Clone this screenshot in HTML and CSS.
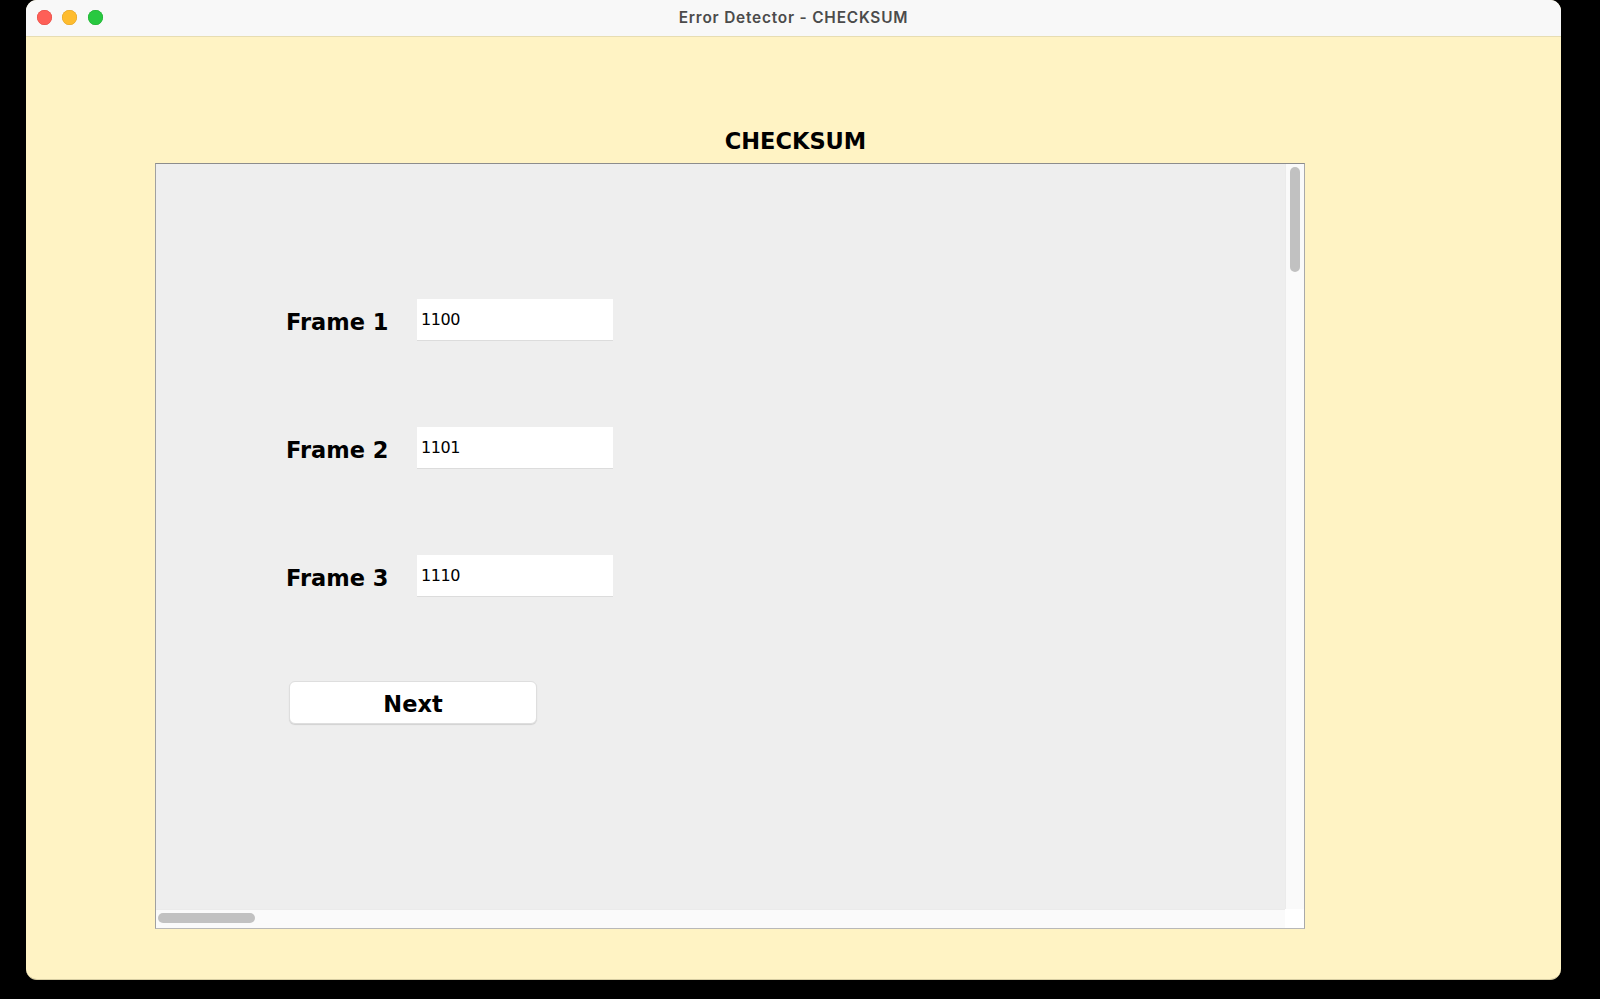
FILE: index.html
```html
<!DOCTYPE html>
<html lang="en">
<head>
<meta charset="utf-8">
<title>Error Detector - CHECKSUM</title>
<link rel="stylesheet" href="styles.css">
</head>
<body>
<div class="window">
  <div class="titlebar">
    <div class="lights">
      <span class="light red"></span>
      <span class="light yellow"></span>
      <span class="light green"></span>
    </div>
    <div class="wintitle">Error Detector - CHECKSUM</div>
    <div></div>
  </div>
  <div class="content">
    <h1 class="heading">CHECKSUM</h1>
    <div class="pane">
      <div class="viewport">
        <div class="row">
          <label class="label" for="f1">Frame 1</label>
          <input class="field" id="f1" type="text" value="1100">
        </div>
        <div class="row">
          <label class="label" for="f2">Frame 2</label>
          <input class="field" id="f2" type="text" value="1101">
        </div>
        <div class="row">
          <label class="label" for="f3">Frame 3</label>
          <input class="field" id="f3" type="text" value="1110">
        </div>
        <button class="next" type="button">Next</button>
      </div>
      <div class="vbar"><div class="vthumb"></div></div>
      <div class="hbar"><div class="hthumb"></div></div>
      <div class="corner"></div>
    </div>
  </div>
</div>
</body>
</html>
```

FILE: styles.css
```css
* { box-sizing: border-box; }

html, body {
  margin: 0;
  padding: 0;
  background: #000000;
  height: 999px;
  overflow: hidden;
}

.window {
  margin-left: 26px;
  width: 1535px;
  height: 980px;
  border-radius: 11px;
  overflow: hidden;
  background: #fff3c4;
  display: flex;
  flex-direction: column;
  border-bottom: 1px solid #d6cca2;
}

.titlebar {
  height: 37px;
  flex: none;
  background: #f8f8f8;
  border-bottom: 1px solid #e7ddb2;
  display: grid;
  grid-template-columns: 1fr auto 1fr;
  align-items: center;
}

.lights {
  display: flex;
  gap: 10.6px;
  padding-left: 10.7px;
  padding-bottom: 1px;
}

.light {
  width: 15px;
  height: 15px;
  border-radius: 50%;
  display: block;
}
.light.red { background: #fe5f57; box-shadow: inset 0 0 0 0.5px #e14942; }
.light.yellow { background: #febc2e; box-shadow: inset 0 0 0 0.5px #dfa123; }
.light.green { background: #28c840; box-shadow: inset 0 0 0 0.5px #1eac2f; }

.wintitle {
  font-family: Inter, "Open Sans", sans-serif;
  font-weight: 600;
  font-size: 15.4px;
  letter-spacing: 0.8px;
  color: #4b4b4b;
  padding-bottom: 1px;
}

.content {
  flex: 1;
  padding-top: 91px;
}

.heading {
  margin: 0 0 9px 0;
  text-align: center;
  font-family: "DejaVu Sans", Verdana, sans-serif;
  font-weight: bold;
  font-size: 22.5px;
  line-height: 26px;
  color: #000000;
  padding-left: 4px;
}

.pane {
  margin-left: 129px;
  width: 1150px;
  height: 766px;
  border: 1px solid;
  border-color: #8c8c8c #a9a9a9 #b8b8b8 #a0a0a0;
  display: grid;
  grid-template-columns: 1fr 19px;
  grid-template-rows: 1fr 19px;
  background: #eeeeee;
}

.viewport {
  background: #eeeeee;
  padding: 135px 0 0 130px;
  display: flex;
  flex-direction: column;
  gap: 87px;
  overflow: hidden;
}

.row {
  display: flex;
  align-items: center;
  height: 41px;
}

.label {
  width: 131px;
  flex: none;
  font-family: "DejaVu Sans", Verdana, sans-serif;
  font-weight: bold;
  font-size: 22.5px;
  line-height: 26px;
  padding-top: 5px;
  color: #000000;
}

.field {
  width: 196px;
  height: 41px;
  border: none;
  outline: none;
  margin: 0;
  background: #ffffff;
  box-shadow: 0 1px 0 #dcdcdc;
  padding: 0 0 0 4px;
  font-family: "DejaVu Sans", Verdana, sans-serif;
  font-size: 16px;
  letter-spacing: -0.45px;
  color: #000000;
}

.next {
  margin: -2px 0 0 3px;
  width: 248px;
  height: 43px;
  background: #ffffff;
  border: 1px solid #dedede;
  border-radius: 6px;
  box-shadow: 0 1px 1px rgba(0, 0, 0, 0.12);
  font-family: "DejaVu Sans", Verdana, sans-serif;
  font-weight: bold;
  font-size: 22.5px;
  line-height: 26px;
  color: #000000;
  padding: 2px 0 0 0;
  align-self: flex-start;
}

.vbar {
  background: #fafafa;
  border-left: 1px solid #ebebeb;
  padding: 3px 0 0 4px;
}

.vthumb {
  width: 10px;
  height: 105px;
  border-radius: 5px;
  background: #c1c1c1;
}

.hbar {
  background: #fafafa;
  border-top: 1px solid #ebebeb;
  padding: 3px 0 0 2px;
}

.hthumb {
  width: 97px;
  height: 10px;
  border-radius: 5px;
  background: #c1c1c1;
}

.corner {
  background: #ffffff;
}
```
